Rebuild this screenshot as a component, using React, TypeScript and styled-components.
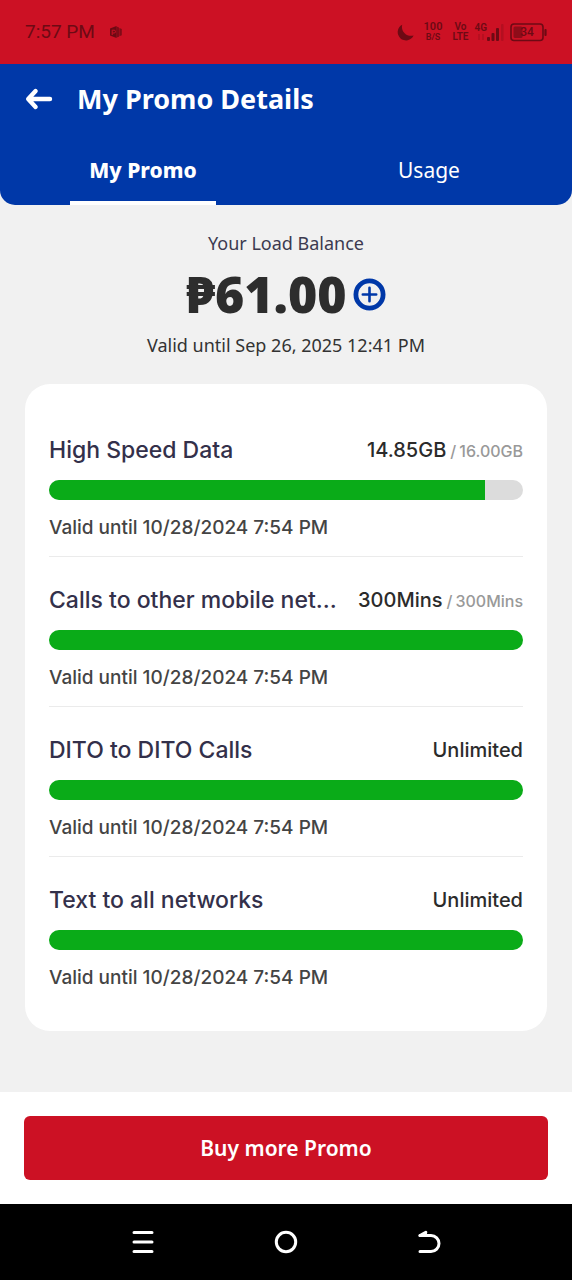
import React from "react";
import styled, { createGlobalStyle } from "styled-components";

const displayFont = `"Noto Sans", "Open Sans", sans-serif`;
const bodyFont = `Inter, "Liberation Sans", sans-serif`;
const statusInk = "#6d0a14";

const GlobalStyle = createGlobalStyle`
  *, *::before, *::after { box-sizing: border-box; }
  body { margin: 0; background: #f1f1f1; font-family: ${bodyFont}; }
  button { border: 0; padding: 0; background: none; font: inherit; color: inherit; cursor: pointer; }
  h1, h2, p { margin: 0; }
  svg { display: block; flex: none; }
`;

const Screen = styled.div`
  display: flex;
  flex-direction: column;
  min-height: 100vh;
`;

const StatusBar = styled.div`
  display: flex;
  align-items: center;
  justify-content: space-between;
  height: 64px;
  padding: 0 25px;
  background: #cc1124;
  color: ${statusInk};
  font-family: Roboto, sans-serif;
`;

const StatusGroup = styled.div<{ $gap: number }>`
  display: flex;
  align-items: center;
  gap: ${(p) => p.$gap}px;
`;

const Clock = styled.time`
  font-size: 19px;
  line-height: 24px;
`;

const StackedLabel = styled.div`
  display: flex;
  flex-direction: column;
  align-items: center;
  font-size: 10px;
  font-weight: 600;
  line-height: 10px;
`;

const StackedTop = styled.span`
  font-size: 11px;
`;

const StackedSmall = styled.span`
  font-size: 9px;
`;

const Header = styled.header`
  background: #0038a8;
  color: #fff;
  border-radius: 0 0 15px 15px;
  font-family: ${displayFont};
  overflow: hidden;
`;

const TitleRow = styled.div`
  display: flex;
  align-items: center;
  gap: 24px;
  height: 70px;
  padding: 0 24px;
`;

const Title = styled.h1`
  font-size: 27px;
  font-weight: 700;
  line-height: 36px;
`;

const Tabs = styled.div`
  display: grid;
  grid-template-columns: 1fr 1fr;
  justify-items: center;
`;

const Tab = styled.button<{ $active?: boolean }>`
  width: 146px;
  height: 71px;
  border-top: 4px solid transparent;
  border-bottom: 4px solid ${(p) => (p.$active ? "#fff" : "transparent")};
  font-size: 21px;
  font-weight: ${(p) => (p.$active ? 800 : 400)};
  line-height: 24px;
`;

const Main = styled.main`
  flex: 1;
  padding: 26px 25px 61px;
`;

const Balance = styled.section`
  display: flex;
  flex-direction: column;
  align-items: center;
  gap: 11px;
  margin-bottom: 27px;
  color: #333;
  font-family: ${displayFont};
`;

const BalanceText = styled.p<{ $tint?: boolean }>`
  color: ${(p) => (p.$tint ? "#3c3a50" : "#333")};
  font-size: 18px;
  line-height: 24px;
`;

const AmountRow = styled.div`
  display: flex;
  align-items: center;
  gap: 6px;
  height: 56px;
`;

const Amount = styled.strong`
  color: #2d2d2d;
  font-family: ${displayFont};
  font-size: 50px;
  font-weight: 900;
  line-height: 56px;
`;

const Card = styled.section`
  padding: 23px 24px 24px;
  border-radius: 25px;
  background: #fff;
`;

const Item = styled.article`
  padding: 28px 0 16px;
  border-bottom: 1px solid #ebebeb;

  &:last-child { border-bottom-color: transparent; }
`;

const ItemHead = styled.div`
  display: flex;
  align-items: center;
  justify-content: space-between;
  gap: 12px;
  height: 30px;
`;

const ItemName = styled.h2`
  color: #33304a;
  font-size: 23px;
  font-weight: 500;
  line-height: 30px;
  white-space: nowrap;
`;

const Quota = styled.p`
  display: flex;
  align-items: baseline;
  gap: 4px;
  color: #2b2b2b;
  font-size: 20px;
  font-weight: 500;
  line-height: 30px;
  white-space: nowrap;
`;

const QuotaTotal = styled.span`
  display: flex;
  gap: 3px;
  color: #999;
  font-size: 16px;
`;

const Track = styled.div`
  height: 20px;
  margin: 15px 0 16px;
  overflow: hidden;
  border-radius: 10px;
  background: #dcdcdc;
`;

const Fill = styled.div`
  height: 100%;
  background: #0aab18;
`;

const Validity = styled.p`
  color: #444;
  font-size: 19px;
  font-weight: 500;
  line-height: 24px;
`;

const Footer = styled.footer`
  padding: 24px;
  background: #fff;
`;

const BuyButton = styled.button`
  display: block;
  width: 100%;
  height: 64px;
  border-radius: 6px;
  background: #cc1124;
  color: #fff;
  font-family: ${displayFont};
  font-size: 21px;
  font-weight: 600;
`;

const NavBar = styled.nav`
  display: flex;
  justify-content: center;
  height: 76px;
  background: #000;
  color: #fff;
`;

const NavButton = styled.button`
  display: flex;
  align-items: center;
  justify-content: center;
  width: 25%;
`;

type Allowance = {
  name: string;
  amount: string;
  total?: string;
  percent: number;
};

const allowances: Allowance[] = [
  { name: "High Speed Data", amount: "14.85GB", total: "16.00GB", percent: 92 },
  { name: "Calls to other mobile net...", amount: "300Mins", total: "300Mins", percent: 100 },
  { name: "DITO to DITO Calls", amount: "Unlimited", percent: 100 },
  { name: "Text to all networks", amount: "Unlimited", percent: 100 },
];

const AppBadgeIcon = () => (
  <svg width="14" height="14" viewBox="0 0 14 14" fill="none">
    <path d="M1 3.6 7.5 1v12L1 10.6z" fill="currentColor" />
    <path d="M7.5 1.6 10 2.4v9.4l-2.5.8zM10.4 3l2.4.9v6.4l-2.4.9z" fill="currentColor" fillOpacity=".8" />
    <path d="M3.2 10V5.2h1.9a1.4 1.4 0 0 1 0 2.8H3.4" stroke="#cc1124" strokeWidth="1" />
  </svg>
);

const MoonIcon = () => (
  <svg width="17" height="17" viewBox="0 0 17 17" fill="currentColor">
    <path d="M5.2.7A8.3 8.3 0 1 0 16.6 11.4C10.5 13.400 3.400 8.200 5.200.7z" />
  </svg>
);

const SignalIcon = () => (
  <svg width="17" height="17" viewBox="0 0 17 17" fill="currentColor">
    <rect x="0" y="13" width="3" height="4" rx="1" />
    <rect x="4.5" y="9" width="3" height="8" rx="1" />
    <rect x="9" y="4" width="3" height="13" rx="1" />
    <rect x="14" y="0" width="2.5" height="17" rx="1" opacity=".25" />
  </svg>
);

const BatteryIcon = () => (
  <svg width="37" height="19" viewBox="0 0 37 19">
    <rect x="1" y="1" width="32" height="16.5" rx="3" fill="none" stroke="currentColor" strokeWidth="1.6" />
    <rect x="3.5" y="3.5" width="9" height="11.5" rx="1.5" fill="currentColor" opacity=".65" />
    <rect x="34.4" y="6" width="2.2" height="7" rx="1" fill="currentColor" />
    <text x="17" y="13.4" textAnchor="middle" fontSize="12" fontWeight="500" fill="currentColor" fontFamily="Roboto, sans-serif">
      34
    </text>
  </svg>
);

const BackArrowIcon = () => (
  <svg width="29" height="24" viewBox="0 0 29 24" fill="none" stroke="currentColor" strokeWidth="4.4" strokeLinecap="round" strokeLinejoin="round">
    <path d="M26 12H6M11.600 4 4.200 12l7.400 8" />
  </svg>
);

const PlusCircleIcon = () => (
  <svg width="33" height="33" viewBox="0 0 33 33" fill="none" stroke="#0038a8">
    <circle cx="16.5" cy="16.5" r="13.6" strokeWidth="4.8" />
    <path d="M16.5 9.8v13.4M9.8 16.5h13.4" strokeWidth="2.6" strokeLinecap="round" />
  </svg>
);

const RecentsIcon = () => (
  <svg width="24" height="26" viewBox="0 0 24 26" stroke="currentColor" strokeWidth="3" strokeLinecap="round">
    <path d="M3 3.400h18M3 13h18M3 22.600h18" />
  </svg>
);

const HomeIcon = () => (
  <svg width="24" height="26" viewBox="0 0 24 26" fill="none" stroke="currentColor" strokeWidth="3">
    <circle cx="12" cy="13" r="9.7" />
  </svg>
);

const ReturnIcon = () => (
  <svg width="24" height="26" viewBox="0 0 24 26" fill="none" stroke="currentColor" strokeWidth="3" strokeLinecap="round" strokeLinejoin="round">
    <path d="M3 22.500h11a8 8 0 0 0 0-16H3" />
    <path d="M3 6.500 8.800 3.200 7.800 6.500z" fill="currentColor" />
  </svg>
);

function AllowanceItem({ name, amount, total, percent }: Allowance) {
  return (
    <Item>
      <ItemHead>
        <ItemName>{name}</ItemName>
        <Quota>
          <span>{amount}</span>
          {total && (
            <QuotaTotal>
              <span>/</span>
              <span>{total}</span>
            </QuotaTotal>
          )}
        </Quota>
      </ItemHead>
      <Track role="progressbar" aria-label={name} aria-valuemin={0} aria-valuemax={100} aria-valuenow={percent}>
        <Fill style={{ width: `${percent}%` }} />
      </Track>
      <Validity>Valid until 10/28/2024 7:54 PM</Validity>
    </Item>
  );
}

export default function App() {
  return (
    <Screen>
      <GlobalStyle />
      <StatusBar>
        <StatusGroup $gap={14}>
          <Clock>7:57 PM</Clock>
          <AppBadgeIcon />
        </StatusGroup>
        <StatusGroup $gap={6}>
          <StatusGroup $gap={10}>
            <MoonIcon />
            <StackedLabel>
              <StackedTop>100</StackedTop>
              <StackedSmall>B/S</StackedSmall>
            </StackedLabel>
            <StackedLabel>
              <span>Vo</span>
              <span>LTE</span>
            </StackedLabel>
          </StatusGroup>
          <StatusGroup $gap={0}>
            <StackedLabel>
              <span>4G</span>
              <svg width="8" height="8" viewBox="0 0 8 8" stroke="currentColor" opacity=".4">
                <path d="M2 1v6M6 1v6" />
              </svg>
            </StackedLabel>
            <SignalIcon />
          </StatusGroup>
          <BatteryIcon />
        </StatusGroup>
      </StatusBar>

      <Header>
        <TitleRow>
          <button type="button" aria-label="Back">
            <BackArrowIcon />
          </button>
          <Title>My Promo Details</Title>
        </TitleRow>
        <Tabs role="tablist">
          <Tab type="button" role="tab" aria-selected="true" $active>
            My Promo
          </Tab>
          <Tab type="button" role="tab" aria-selected="false">
            Usage
          </Tab>
        </Tabs>
      </Header>

      <Main>
        <Balance>
          <BalanceText $tint>Your Load Balance</BalanceText>
          <AmountRow>
            <Amount>₱61.00</Amount>
            <button type="button" aria-label="Add load">
              <PlusCircleIcon />
            </button>
          </AmountRow>
          <BalanceText>Valid until Sep 26, 2025 12:41 PM</BalanceText>
        </Balance>

        <Card>
          {allowances.map((a) => (
            <AllowanceItem key={a.name} {...a} />
          ))}
        </Card>
      </Main>

      <Footer>
        <BuyButton type="button">Buy more Promo</BuyButton>
      </Footer>

      <NavBar aria-label="System navigation">
        <NavButton type="button" aria-label="Recent apps">
          <RecentsIcon />
        </NavButton>
        <NavButton type="button" aria-label="Home">
          <HomeIcon />
        </NavButton>
        <NavButton type="button" aria-label="Go back">
          <ReturnIcon />
        </NavButton>
      </NavBar>
    </Screen>
  );
}
